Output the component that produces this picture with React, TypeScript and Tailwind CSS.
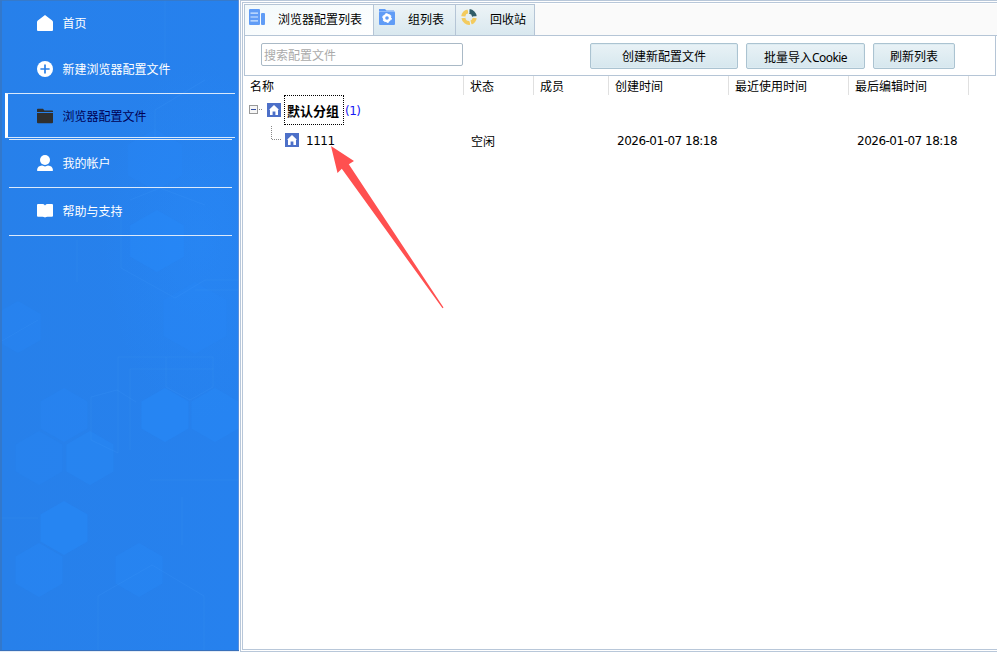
import React from "react";

const NavIcon = ({ kind }: { kind: string }) => (
  <svg width="16" height="16" viewBox="0 0 16 16" fill="#fff" className="block shrink-0">
    {kind === "home" && <path d="M8 0 L15.2 5.6 Q16 6.2 16 7.2 V15 Q16 16 15 16 H1 Q0 16 0 15 V7.2 Q0 6.2 .8 5.6Z" />}
    {kind === "plus" && (
      <>
        <circle cx="8" cy="8" r="8" />
        <path d="M8 3.4V12.6M3.4 8H12.6" stroke="#2a80e8" strokeWidth="1.7" />
      </>
    )}
    {kind === "folder" && (
      <path fill="#2f2f2f" d="M0 4V1.6Q0 .8 .8 .8H6L7.4 2.4H15.2Q16 2.4 16 3.2V4ZM0 5H16V14.2Q16 15.2 15 15.2H1Q0 15.2 0 14.2Z" />
    )}
    {kind === "user" && (
      <>
        <circle cx="8" cy="5" r="5" />
        <path d="M0 15.2Q.4 11 5 10.6Q8 12.2 11 10.6Q15.6 11 16 15.2Q16 16 15.2 16H.8Q0 16 0 15.2Z" />
      </>
    )}
    {kind === "book" && (
      <path d="M0 2.1Q0 1.1 1 1.1H5.5Q7 1.1 8 2.4Q9 1.1 10.5 1.1H15Q16 1.1 16 2.1V12.8Q16 13.8 15 13.8H10.5Q9 13.8 8 14.6Q7 13.8 5.5 13.8H1Q0 13.8 0 12.8Z" />
    )}
  </svg>
);

const hex = (x: number, y: number, r: number) =>
  [[0, -1], [0.87, -0.5], [0.87, 0.5], [0, 1], [-0.87, 0.5], [-0.87, -0.5]]
    .map(([a, b]) => `${x + a * r},${y + b * r}`)
    .join(" ");

const Backdrop = () => (
  <svg width="239" height="652" className="absolute inset-0">
    <defs>
      <linearGradient id="side" x1="0" y1="0" x2="1" y2="0">
        <stop offset="0" stopColor="#2780ea" />
        <stop offset="1" stopColor="#2681ee" />
      </linearGradient>
      <radialGradient id="glow">
        <stop offset="0" stopColor="#288bfb" stopOpacity=".4" />
        <stop offset="1" stopColor="#288bfb" stopOpacity="0" />
      </radialGradient>
    </defs>
    <rect width="239" height="652" fill="url(#side)" />
    <ellipse cx="200" cy="240" rx="100" ry="180" fill="url(#glow)" />
    <g fill="#2789f8" fillOpacity=".55">
      <polygon points={hex(157, 241, 31)} />
      <polygon points={hex(165, 415, 27)} />
      <polygon points={hex(215, 415, 27)} fillOpacity=".4" />
      <polygon points={hex(64, 528, 27)} />
      <polygon points={hex(39, 570, 27)} fillOpacity=".35" />
      <polygon points={hex(139, 570, 27)} fillOpacity=".35" />
      <polygon points={hex(64, 415, 27)} fillOpacity=".3" />
      <polygon points={hex(90, 458, 27)} fillOpacity=".4" />
      <polygon points={hex(39, 458, 27)} fillOpacity=".25" />
      <polygon points={hex(18, 327, 26)} fillOpacity=".3" />
      <polygon points={hex(195, 318, 36)} fillOpacity=".3" />
      <polygon points={hex(155, 160, 31)} fillOpacity=".3" />
    </g>
    <g fill="none" stroke="#4299f8" strokeOpacity=".18">
      <path d="M121 205V268L175 298L205 280H239M239 290H195M205 80L155 110V137M165 0V70M77 240V282M0 342L38 320M91 440V397L117 390L136 402M91 440L118 453V357H213M130 450V369H213M166 357V387L190 400L213 387V357M98 650V596L152 565L204 596V650M182 497V545M0 518H38M150 480H239M130 200L160 188L205 205" />
    </g>
    <rect width="2" height="652" fill="#3675c4" fillOpacity=".8" />
    <rect y="0" width="239" height="1" fill="#3b78c2" fillOpacity=".8" />
    <rect x="238" width="1" height="652" fill="#5a8fdb" />
    <rect y="650" width="239" height="1" fill="#3970ba" />
    <rect y="651" width="239" height="1" fill="#e5edf7" />
  </svg>
);

const NavItem = ({ kind, label, dark = false }: { kind: string; label: string; dark?: boolean }) => (
  <div className={`flex gap-[9.5px] leading-4 ${dark ? "text-[#000054]" : "text-white"}`}>
    <NavIcon kind={kind} />
    <span className="pt-px">{label}</span>
  </div>
);

const Sidebar = () => (
  <aside className="relative h-[652px] w-[239px] shrink-0 overflow-hidden">
    <Backdrop />
    <nav className="relative flex flex-col">
      <div className="h-[47px] pt-[15px] pl-[37px]"><NavItem kind="home" label="首页" /></div>
      <div className="h-[46px] pt-[14px] pl-[37px]"><NavItem kind="plus" label="新建浏览器配置文件" /></div>
      <div className="ml-[5px] h-[45px] w-[230px] border-y border-l-[3px] border-y-[#d9e9fc] border-l-white pt-[14px] pl-[29px]">
        <NavItem kind="folder" label="浏览器配置文件" dark />
      </div>
      <div className="mt-px ml-[9px] h-[49px] w-[223px] border-y border-[#dceafb] pt-[15px] pl-[28px]">
        <NavItem kind="user" label="我的帐户" />
      </div>
      <div className="ml-[9px] h-[48px] w-[223px] border-b border-[#dceafb] pt-[15px] pl-[28px]">
        <NavItem kind="book" label="帮助与支持" />
      </div>
    </nav>
  </aside>
);

const ListIcon = () => (
  <svg width="16" height="16" viewBox="0 0 16 16" className="shrink-0">
    <rect width="11" height="16" rx="1" fill="#609cf6" />
    <rect x="12" y="4" width="4" height="12" rx="1" fill="#609cf6" />
    <path d="M1.5 4.2H9M1.5 8H9M1.5 11.8H9" stroke="#d4e7ff" strokeWidth="1.2" />
  </svg>
);

const GroupIcon = () => (
  <svg width="16" height="16" viewBox="0 0 16 16" className="shrink-0">
    <path d="M0 0H6L7.5 1.5H15V3H0Z" fill="#609cf6" />
    <rect y="2.5" width="16" height="13.5" rx="1" fill="#609cf6" />
    <path d="M0 2.5H16" stroke="#a9cbfb" strokeWidth=".7" />
    <circle cx="8" cy="9" r="3" fill="none" stroke="#fff" strokeWidth="2.4" />
    <circle cx="8" cy="9" r="4.4" fill="none" stroke="#fff" strokeWidth="1" strokeDasharray="2.3 2.3" />
  </svg>
);

const RecycleIcon = () => (
  <svg width="16" height="16" viewBox="0 0 16 16" fill="none" strokeWidth="4" className="shrink-0">
    <path d="M7 2.4A5.8 5.8 0 0 0 2.2 7.4" stroke="#f3cb5f" />
    <path d="M2.4 9A5.8 5.8 0 0 0 9 13.8" stroke="#f3cb5f" />
    <path d="M10 13.6A5.8 5.8 0 0 0 13.7 9" stroke="#f3cb5f" />
    <path d="M8.4 2.4A5.6 5.6 0 0 1 13.4 7.4" stroke="#315d68" strokeWidth="4.6" />
    <path d="M7 0L8 4M0 8.2H4M8.5 11L10 16M12 8H16" stroke="#eef4f6" strokeWidth=".8" />
  </svg>
);

const House = () => (
  <svg width="14" height="14" viewBox="0 0 14 14" className="block shrink-0">
    <rect width="14" height="14" fill="#4d70c8" />
    <path d="M7 2L12 6.8H11V12H8.4V8.5H5.6V12H3V6.8H2Z" fill="#fff" />
  </svg>
);

const Tabs = () => (
  <div className="flex h-[32px] bg-[#fafafa] leading-4">
    <div className="flex w-[130px] border-t border-r border-b border-l border-[#b5c5d6] bg-gradient-to-br from-[#f2f9fb] to-white pt-[4px] pl-[4px]">
      <ListIcon /><span className="mt-[3px] ml-[13px]">浏览器配置列表</span>
    </div>
    <div className="flex w-[82px] border-t border-r border-b border-[#b5c5d6] bg-gradient-to-b from-[#edf4f7] to-[#d9e8ef] pt-[4px] pl-[5px]">
      <GroupIcon /><span className="mt-[3px] ml-[13px]">组列表</span>
    </div>
    <div className="flex w-[79px] border-t border-r border-b border-[#b5c5d6] bg-gradient-to-b from-[#edf4f7] to-[#d9e8ef] pt-[4px] pl-[5px]">
      <RecycleIcon /><span className="mt-[3px] ml-[13px]">回收站</span>
    </div>
    <div className="flex-1 border-b border-[#b5c5d6]" />
  </div>
);

const button = "mt-[7px] h-[26px] rounded-[2px] border border-[#abc3d1] bg-gradient-to-b from-[#e9f2f6] to-[#d6e7ee] pt-px text-center leading-[25px] shadow-[inset_0_0_0_1px_#ddebf1]";

const Toolbar = () => (
  <div className="flex h-[40px] w-[752px] border-r border-b border-l border-[#b5c5d6] bg-white">
    <input
      placeholder="搜索配置文件"
      className="mt-[7px] ml-4 h-[23px] w-[202px] rounded-[2px] border border-[#a9b9c6] bg-white px-[2px] pt-[2px] pb-0 outline-none placeholder:text-[#aaa] placeholder:opacity-100"
    />
    <button className={`${button} ml-[127px] w-[148px]`}>创建新配置文件</button>
    <button className={`${button} ml-[8px] w-[119px]`}>批量导入<span className="font-['Noto_Sans'] tracking-[-0.6px]">Cookie</span></button>
    <button className={`${button} ml-[8px] w-[82px]`}>刷新列表</button>
  </div>
);

const header = "border-r border-[#e0e0e0] pl-[6px] pt-[3px]";
const latin = "font-['DejaVu_Sans'] text-[12px] tracking-[-0.5px]";

const Table = () => (
  <div className="flex flex-1 flex-col leading-4">
    <div className="flex h-[19px]">
      <div className={`${header} w-[220px]`}>名称</div>
      <div className={`${header} w-[70px]`}>状态</div>
      <div className={`${header} w-[75px]`}>成员</div>
      <div className={`${header} w-[120px]`}>创建时间</div>
      <div className={`${header} w-[120px]`}>最近使用时间</div>
      <div className={`${header} w-[120px]`}>最后编辑时间</div>
    </div>
    <div className="flex h-[30px] items-center pl-[5px]">
      <svg width="14" height="10" viewBox="0 0 14 10" className="shrink-0" fill="none">
        <rect x=".5" y=".5" width="8" height="8" fill="#f6f6f6" stroke="#999" />
        <path d="M2 4.5H7" stroke="#354fa3" />
        <path d="M10 4.5H14" stroke="#888" strokeDasharray="1 1" />
      </svg>
      <div className="ml-[4px]"><House /></div>
      <div className="ml-[3px] h-[30px] w-[60px] border border-dotted border-black pt-px pl-[2px] text-[13px] leading-[30px] font-bold">默认分组</div>
      <span className={`${latin} ml-px pt-[2px] text-[#1818f4]`}>(1)</span>
    </div>
    <div className="flex h-[30px] items-center">
      <div className="flex w-[227px] items-center pl-[27px]">
        <svg width="11" height="30" viewBox="0 0 11 30" fill="none" className="shrink-0">
          <path d="M.5 1V14.5H11" stroke="#888" strokeDasharray="1 1" />
        </svg>
        <div className="ml-[3px]"><House /></div>
        <span className={`${latin} ml-[7px] pt-[2px]`}>1111</span>
      </div>
      <span className="w-[146px] pt-[3px]">空闲</span>
      <span className={`${latin} w-[240px] pt-[2px]`}>2026-01-07 18:18</span>
      <span className={`${latin} pt-[2px]`}>2026-01-07 18:18</span>
    </div>
  </div>
);

export default function App() {
  return (
    <div className="relative flex h-[652px] w-[997px] overflow-hidden bg-white font-['Liberation_Sans','Noto_Sans_CJK_SC',sans-serif] text-[12px] text-black">
      <Sidebar />
      <div className="ml-px flex h-[652px] flex-1 border-y border-l border-[#b8c7d9] p-px pr-0">
        <main className="flex flex-1 flex-col border-y border-l border-[#b8c7d9] pt-px pl-px">
          <Tabs />
          <Toolbar />
          <Table />
        </main>
      </div>
      <svg width="120" height="170" viewBox="0 0 120 170" className="pointer-events-none absolute top-[142px] left-[328px]">
        <path d="M3 4L26 19L20.8 22.2L115.5 165.5L114.5 166.2L13.8 26.8L9.5 31Z" fill="#ff5050" />
      </svg>
    </div>
  );
}
